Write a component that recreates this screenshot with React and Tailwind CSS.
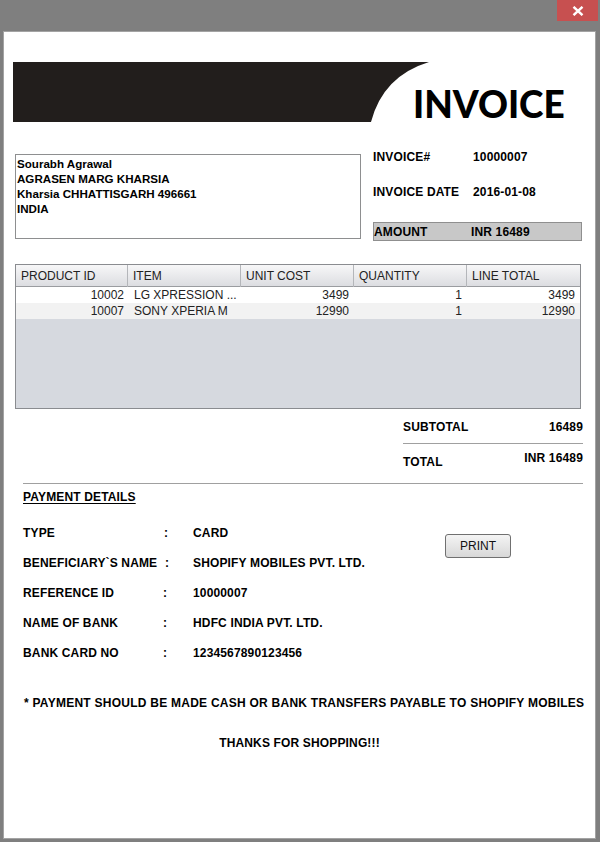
import React from "react";

const F = { fontFamily: '"Liberation Sans", Arial, sans-serif' };

function PayRow({ label, value, colonPad = "pl-0" }) {
  return (
    <div className="flex h-[16px] items-center text-[12px] font-bold text-black leading-[16px] tracking-[0.15px]">
      <div className="w-[140px] shrink-0 whitespace-nowrap">{label}</div>
      <div className={`w-[30px] shrink-0 ${colonPad}`}>:</div>
      <div className="whitespace-nowrap">{value}</div>
    </div>
  );
}

export default function App() {
  const rows = [
    { id: "10002", item: "LG XPRESSION ...", cost: "3499", qty: "1", total: "3499", bg: "bg-white" },
    { id: "10007", item: "SONY XPERIA M", cost: "12990", qty: "1", total: "12990", bg: "bg-[#f2f2f2]" },
  ];
  const headers = ["PRODUCT ID", "ITEM", "UNIT COST", "QUANTITY", "LINE TOTAL"];
  return (
    <div className="w-[600px] h-[842px] bg-[#7f7f7f] flex flex-col overflow-hidden" style={F}>
      {/* title bar */}
      <div className="h-[31px] flex justify-end items-start">
        <div className="w-[41px] h-[21px] bg-[#c75050] mr-[2px] flex items-center justify-center">
          <svg width="12" height="10" viewBox="0 0 12 10">
            <path d="M1.5 0.8 L10.5 9.2 M10.5 0.8 L1.5 9.2" stroke="#fff" strokeWidth="2.4" />
          </svg>
        </div>
      </div>
      {/* white panel */}
      <div className="ml-[3px] w-[593px] h-[808px] bg-white border border-[#a3a3a3] flex flex-col">
        {/* banner */}
        <div className="relative mt-[30px] ml-[9px] w-[570px] h-[60px] flex items-end">
          <svg className="absolute left-0 top-0" width="420" height="60" viewBox="0 0 420 60">
            <path d="M0 0 H416 Q370 14 358 60 H0 Z" fill="#221e1c" />
          </svg>
          <div
            className="relative ml-[400px] mb-[0px] text-[37px] leading-[37px] font-black text-black"
            style={{ fontFamily: 'Lato, "Liberation Sans", sans-serif' }}
          >
            INVOICE
          </div>
        </div>

        {/* address + invoice info */}
        <div className="mt-[27px] flex items-start">
          <div className="mt-[5px] ml-[11px] w-[346px] h-[85px] border border-[#8e8f90] pl-[1px] pt-[1px] text-[11.6px] font-bold leading-[15px] text-black">
            <div>Sourabh Agrawal</div>
            <div>AGRASEN MARG KHARSIA</div>
            <div>Kharsia CHHATTISGARH 496661</div>
            <div>INDIA</div>
          </div>
          <div className="ml-[12px] flex flex-col text-[12px] font-bold text-black tracking-[0.15px]">
            <div className="flex h-[16px] leading-[16px]">
              <div className="w-[100px]">INVOICE#</div>
              <div>10000007</div>
            </div>
            <div className="flex h-[16px] leading-[16px] mt-[19px]">
              <div className="w-[100px]">INVOICE DATE</div>
              <div>2016-01-08</div>
            </div>
            <div className="flex mt-[22px] w-[209px] h-[19px] leading-[18px] bg-[#c8c8c8] border border-[#8f8f8f]">
              <div className="w-[97px]">AMOUNT</div>
              <div>INR 16489</div>
            </div>
          </div>
        </div>

        {/* table */}
        <div className="mt-[23px] ml-[11px] w-[566px] h-[145px] border border-[#8a8c90] bg-[#d6d9df] flex flex-col text-[12px] text-[#222]">
          <div className="grid grid-cols-[112px_113px_113px_113px_1fr] h-[22px] bg-gradient-to-b from-[#f7f7f8] to-[#dcdde1] border-b border-[#9a9ca0]">
            {headers.map((h, i) => (
              <div
                key={h}
                className={`pl-[5px] leading-[22px] ${i < 4 ? "border-r border-[#b4b6ba]" : ""}`}
              >
                {h}
              </div>
            ))}
          </div>
          {rows.map((r) => (
            <div key={r.id} className={`grid grid-cols-[112px_113px_113px_113px_1fr] h-[16px] leading-[17px] ${r.bg}`}>
              <div className="text-right pr-[4px]">{r.id}</div>
              <div className="pl-[6px] whitespace-nowrap">{r.item}</div>
              <div className="text-right pr-[5px]">{r.cost}</div>
              <div className="text-right pr-[5px]">{r.qty}</div>
              <div className="text-right pr-[5px]">{r.total}</div>
            </div>
          ))}
        </div>

        {/* totals */}
        <div className="mt-[10px] ml-[399px] w-[180px] flex flex-col text-[12px] font-bold text-black tracking-[0.15px]">
          <div className="flex justify-between h-[16px] leading-[17px]">
            <span>SUBTOTAL</span>
            <span>16489</span>
          </div>
          <div className="mt-[8px] h-px bg-[#a0a0a0]" />
          <div className="mt-[6px] flex justify-between h-[20px]">
            <span className="mt-[4px] leading-[16px]">TOTAL</span>
            <span className="leading-[16px]">INR 16489</span>
          </div>
        </div>

        <div className="mt-[13px] ml-[19px] w-[560px] h-px bg-[#a0a0a0]" />

        <div className="mt-[5px] ml-[19px] text-[12px] font-bold leading-[16px] text-black underline underline-offset-[2px] tracking-[0.15px]">
          PAYMENT DETAILS
        </div>

        {/* payment details */}
        <div className="mt-[20px] ml-[19px] flex items-start">
          <div className="w-[422px] flex flex-col gap-[14px]">
            <PayRow label="TYPE" value="CARD" colonPad="pl-[1px]" />
            <PayRow label="BENEFICIARY`S NAME" value="SHOPIFY MOBILES PVT. LTD." colonPad="pl-[2px]" />
            <PayRow label="REFERENCE ID" value="10000007" />
            <PayRow label="NAME OF BANK" value="HDFC INDIA PVT. LTD." />
            <PayRow label="BANK CARD NO" value="1234567890123456" />
          </div>
          <button className="mt-[9px] w-[66px] h-[24px] rounded-[3px] border border-[#707070] bg-gradient-to-b from-[#f4f4f4] to-[#d8d8d8] text-[12px] text-[#111] leading-[22px]">
            PRINT
          </button>
        </div>

        {/* footer */}
        <div className="mt-[34px] ml-[20px] text-[12px] font-bold leading-[16px] text-black whitespace-nowrap tracking-[0.25px]">
          * PAYMENT SHOULD BE MADE CASH OR BANK TRANSFERS PAYABLE TO SHOPIFY MOBILES
        </div>
        <div className="mt-[24px] text-center text-[12px] font-bold leading-[16px] text-black tracking-[0.15px]">
          THANKS FOR SHOPPING!!!
        </div>
      </div>
    </div>
  );
}
